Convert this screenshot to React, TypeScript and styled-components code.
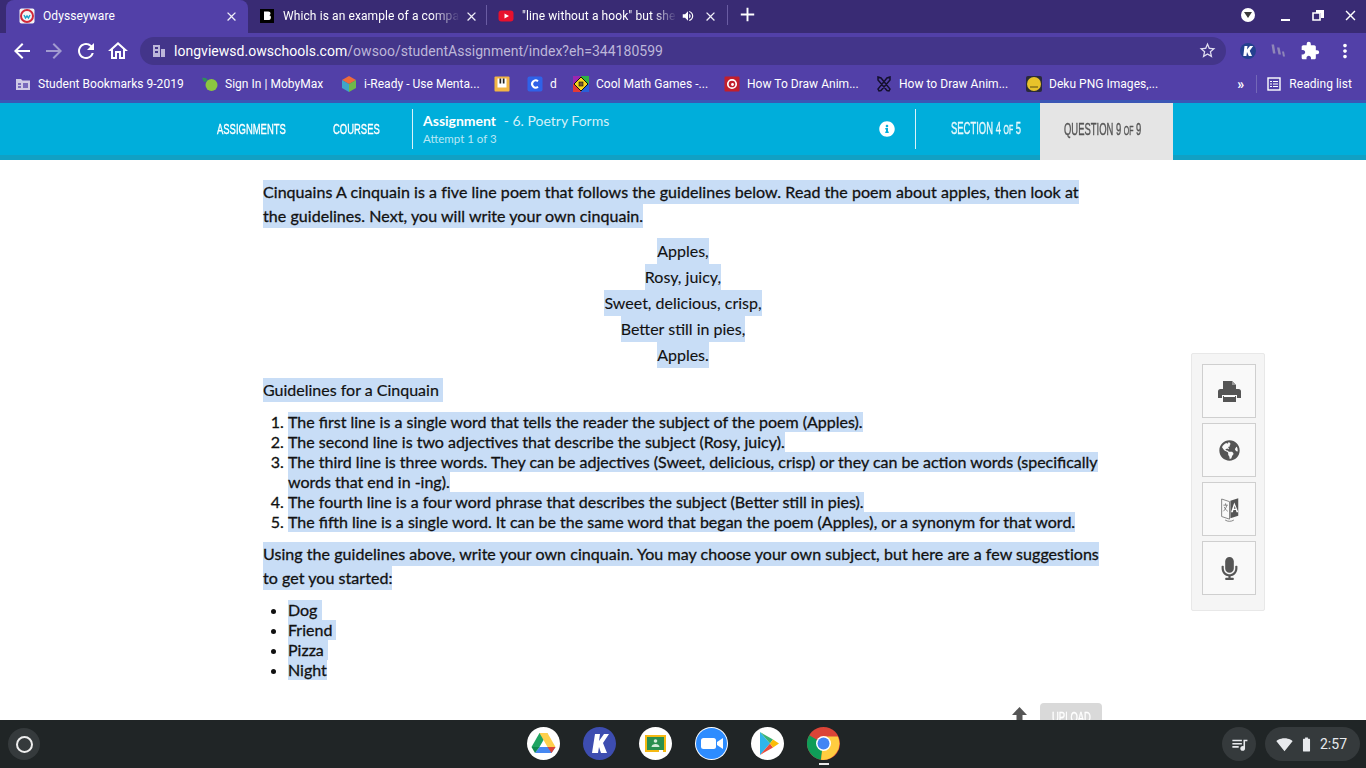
import React from "react";
import styled, { createGlobalStyle } from "styled-components";
import {
  MdArrowBack, MdArrowForward, MdRefresh, MdOutlineHome, MdStarBorder, MdExtension,
  MdMoreVert, MdClose, MdAdd, MdSignalWifi4Bar, MdBatteryFull, MdQueueMusic, MdVolumeUp,
} from "react-icons/md";
import { FaGlobeAmericas, FaMicrophone, FaInfoCircle } from "react-icons/fa";

const Global = createGlobalStyle`
  html, body { margin: 0; padding: 0; height: 100%; overflow: hidden; background: #fff; }
  * { box-sizing: border-box; }
`;

const Screen = styled.div`
  width: 1366px; height: 768px; display: flex; flex-direction: column; overflow: hidden;
  font-family: Roboto, "Liberation Sans", sans-serif;
`;
const TabStrip = styled.div`
  height: 33px; flex: none; background: #392b74; display: flex; align-items: stretch; padding-left: 6px; color: #fff;
`;
const Tab = styled.div<{ $active?: boolean; $w: number; $pr?: number }>`
  width: ${p => p.$w}px; flex: none; display: flex; align-items: center; padding: 0 ${p => p.$pr ?? 9}px 1px ${p => (p.$active ? 13 : 11)}px; gap: 8px;
  font-size: 12px; background: ${p => (p.$active ? "#5240a8" : "transparent")};
  border-radius: ${p => (p.$active ? "8px 8px 0 0" : "0")}; position: relative; color: #fff;
`;
const TabSep = styled.div`
  width: 1px; height: 20px; flex: none; align-self: center; margin-top: -3px; background: #6a5ca3;
`;
const TabTitle = styled.span<{ $fade?: boolean }>`
  flex: 1; white-space: nowrap; letter-spacing: .1px;
  ${p => p.$fade ? "mask-image: linear-gradient(90deg,#000 84%,transparent 100%);" : ""}
`;
const TabClose = styled(MdClose)<{ $pull?: number }>`
  flex: none; font-size: 15px; color: #f0eef8; margin-left: ${p => p.$pull ?? 0}px;
`;
const TabAudio = styled(MdVolumeUp)`
  flex: none; font-size: 14px; margin-left: -4px;
`;
const NewTab = styled(MdAdd)`
  font-size: 23px; margin: 3px 0 0 8px; color: #fff;
`;
const WinControls = styled.div`
  margin-left: auto; display: flex; align-items: center; padding-right: 7px; gap: 16px; height: 30px;
`;
const ProfileDot = styled.div`
  width: 14px; height: 14px; border-radius: 50%; background: #fff; display: flex; align-items: center; justify-content: center; margin-right: 7px;
`;
const Toolbar = styled.div`
  height: 33px; flex: none; background: #5240a8; display: flex; align-items: center; padding: 2px 0 0 10px; color: #fff;
`;
const NavIcons = styled.div`
  display: flex; align-items: center; gap: 8px; width: 130px; font-size: 24px;
`;
const Omnibox = styled.div`
  width: 1086px; height: 28px; border-radius: 14px; background: #43358a; display: flex; align-items: center; padding: 0 9px 0 11px; font-size: 14px; letter-spacing: .03px;
`;
const Url = styled.span`
  margin-left: 7px; color: #fff; flex: 1;
  em { font-style: normal; color: #bdb7d9; }
`;
const Extensions = styled.div`
  display: flex; align-items: center; flex: 1; padding-left: 14px; gap: 14px;
`;
const Bookmarks = styled.div`
  height: 34px; flex: none; background: #5240a8; display: flex; align-items: center; padding: 2px 0 0 15px; font-size: 12px; letter-spacing: .03px; color: #fff; position: relative;
`;
const Bookmark = styled.div<{ $w?: number }>`
  display: flex; align-items: center; gap: 7px; white-space: nowrap; flex: none;
  ${p => (p.$w ? `width: ${p.$w}px;` : "")}
`;
const BookmarkEnd = styled.div`
  position: absolute; right: 14px; top: 1px; height: 34px; display: flex; align-items: center; gap: 9px;
`;
const Chevrons = styled.span`
  font-size: 14px; font-weight: 700; margin-right: 3px;
`;
const VLine = styled.div`
  width: 1px; height: 18px; background: #7468b8;
`;
const NavBar = styled.div`
  height: 60px; flex: none; background: #00aedb; border-top: 3px solid #3b56b5; border-bottom: 5px solid #11a0c4;
  display: flex; align-items: center; color: #fff; padding-left: 217px;
`;
const Condensed = styled.span<{ $color?: string; $big?: boolean }>`
  display: inline-block; transform: scale(.63, ${p => (p.$big ? 1.12 : 1)}); transform-origin: left center; white-space: nowrap;
  font-family: "Liberation Sans", sans-serif; font-size: 15px; color: ${p => p.$color ?? "#fff"};
  -webkit-text-stroke: .35px ${p => p.$color ?? "#fff"};
  small { font-size: 11px; }
`;
const NavLink = styled.span<{ $w: number }>`
  width: ${p => p.$w}px; display: block; padding-bottom: 2px;
`;
const NavDivider = styled.div`
  width: 1px; height: 40px; background: #d8f2f9;
`;
const Crumb = styled.div`
  margin-left: 10px; width: 456px; font-family: Lato, sans-serif; line-height: 18px; padding-top: 2px;
`;
const CrumbTop = styled.div`
  font-size: 14px; color: #d3f1f9;
  b { color: #fff; font-weight: 700; margin-right: 4px; }
`;
const CrumbSub = styled.div`
  font-size: 11.500px; color: #b9e8f5;
`;
const InfoIcon = styled(FaInfoCircle)`
  font-size: 16px; color: #fff; margin-right: 20px;
`;
const SectionLabel = styled.div`
  margin-left: 35px; width: 89px; padding-bottom: 4px;
`;
const QuestionTab = styled.div`
  width: 133px; height: 57px; align-self: flex-start; background: #e5e5e5; display: flex; align-items: center; padding: 0 0 7px 24px;
`;
const Main = styled.main`
  flex: 1; min-height: 0; overflow: hidden; position: relative; background: #fff;
`;
const Column = styled.div`
  width: 840px; margin-left: 263px; padding-top: 19px; font-family: Lato, sans-serif; font-size: 16px; color: #111;
`;
const Hl = styled.span<{ $t?: number; $b?: number }>`
  background: #c8ddf6; padding: ${p => p.$t ?? 1.5}px 0 ${p => p.$b ?? 3.5}px; -webkit-box-decoration-break: clone; box-decoration-break: clone;
`;
const Para = styled.p<{ $mt?: number; $bold?: boolean }>`
  margin: ${p => p.$mt ?? 0}px 0 0; line-height: 24px; letter-spacing: ${p => (p.$bold ? ".05px" : "0")};
  -webkit-text-stroke: ${p => (p.$bold ? ".3px #111" : ".2px #111")};
`;
const Poem = styled.div`
  margin-top: 10px; text-align: center; line-height: 26px; -webkit-text-stroke: .1px #111;
`;
const List = styled.ol`
  margin: 11px 0 0; padding-left: 25px; line-height: 20px; -webkit-text-stroke: .3px #111;
`;
const BulletList = styled.ul`
  margin: 11px 0 0; padding-left: 25px; line-height: 20px; -webkit-text-stroke: .3px #111;
`;
const UploadRow = styled.div`
  position: absolute; left: 1012px; top: 543px; display: flex; gap: 13px; align-items: flex-start;
`;
const UploadBtn = styled.div`
  width: 62px; height: 30px; border-radius: 4px; background: #d9d9d9; padding: 4px 0 0 12px;
`;
const ToolPanel = styled.aside`
  position: absolute; left: 1191px; top: 193px; width: 74px; height: 258px; background: #f5f5f5; border: 1px solid #e8e8e8; border-radius: 2px;
  display: flex; flex-direction: column; align-items: center; gap: 5px; padding: 10px 0 0 2px;
`;
const ToolBtn = styled.div`
  width: 54px; height: 54px; background: #f9f9f9; border: 1px solid #cfcfcf; display: flex; align-items: center; justify-content: center; color: #555; font-size: 21px;
`;
const Shelf = styled.footer`
  height: 48px; flex: none; background: #202526; display: flex; align-items: center; position: relative; padding: 0 6px 0 8px;
`;
const Launcher = styled.div`
  width: 32px; height: 32px; border-radius: 50%; background: #353a3c; display: flex; align-items: center; justify-content: center;
  &::after { content: ""; width: 13px; height: 13px; border: 2px solid #eee; border-radius: 50%; }
`;
const Dock = styled.div`
  position: absolute; left: 527px; top: 7px; display: flex; gap: 23px;
`;
const DockItem = styled.div<{ $on?: boolean }>`
  width: 33px; height: 33px; position: relative;
  svg { display: block; }
  ${p => p.$on ? `&::after { content: ""; position: absolute; left: 12px; bottom: -5px; width: 10px; height: 2px; background: #e8e8e8; }` : ""}
`;
const Tray = styled.div`
  margin-left: auto; display: flex; align-items: center; gap: 9px; color: #e8eaed;
`;
const TrayCircle = styled.div`
  width: 34px; height: 34px; border-radius: 50%; background: #353a3c; display: flex; align-items: center; justify-content: center; font-size: 19px;
`;
const TrayPill = styled.div`
  width: 95px; height: 34px; border-radius: 17px; background: #353a3c; display: flex; align-items: center; padding-left: 11px; font-size: 14px; gap: 5px;
`;

const Fav = ({ children, s = 16 }: { children: React.ReactNode; s?: number }) => (
  <svg width={s} height={s} viewBox="0 0 16 16" style={{ flex: "none" }}>{children}</svg>
);
const Folder = () => (
  <Fav><path d="M1 3h5l1.500 1.500H15V14H1z" fill="#cfc9e6" /><path d="M8 7h5v5H8zM3 7h3v2H3zM3 10h3v2H3z" fill="#5240a8" opacity=".7" /></Fav>
);

export default function App() {
  return (
    <Screen>
      <Global />
      <TabStrip>
        <Tab $active $w={242}>
          <Fav><rect x="0.5" y="0.5" width="15" height="15" rx="2" fill="#f4f4f4" /><circle cx="8" cy="8" r="6" fill="none" stroke="#d3283a" strokeWidth="2" /><path d="M5 7l1.500 3L8 8l1.500 2L11 7" stroke="#1ba0c8" strokeWidth="1.400" fill="none" /></Fav>
          <TabTitle>Odysseyware</TabTitle>
          <TabClose />
        </Tab>
        <Tab $w={238} $pr={7}>
          <Fav><rect x="1" y="1" width="14" height="14" fill="#000" /><path d="M5 3.500h4.200c1.600 0 2.300.9 2.300 2 0 .9-.5 1.500-1.200 1.800 1 .2 1.600 1 1.600 2.100 0 1.600-1 2.600-2.800 2.600H5z" fill="#fff" /></Fav>
          <TabTitle $fade>Which is an example of a compa</TabTitle>
          <TabClose $pull={-4} />
        </Tab>
        <TabSep />
        <Tab $w={240}>
          <Fav><rect x="0.5" y="2.500" width="15" height="11" rx="3" fill="#e8112d" /><path d="M6.500 5.500v5L11 8z" fill="#fff" /></Fav>
          <TabTitle $fade>"line without a hook" but she</TabTitle>
          <TabAudio />
          <TabClose />
        </Tab>
        <TabSep />
        <NewTab />
        <WinControls>
          <ProfileDot><svg width="8" height="6" viewBox="0 0 8 6"><path d="M0 0h8L4 6z" fill="#3a3a3a" /></svg></ProfileDot>
          <svg width="16" height="16" viewBox="0 0 16 16"><path d="M3 12h9v2H3z" fill="#fff" /></svg>
          <svg width="16" height="16" viewBox="0 0 16 16"><path d="M3 6h7v7H3z" fill="none" stroke="#fff" strokeWidth="1.600" /><path d="M6 3h8v8h-3V6H6z" fill="#fff" /></svg>
          <MdClose size={17} />
        </WinControls>
      </TabStrip>
      <Toolbar>
        <NavIcons>
          <MdArrowBack />
          <MdArrowForward color="#a29bd0" />
          <MdRefresh />
          <MdOutlineHome />
        </NavIcons>
        <Omnibox>
          <Fav><path d="M2 2h7v12H2zM10 6h4v8h-4z" fill="#bdb7d9" /><path d="M4 4h3v2H4zM4 8h3v2H4z" fill="#43358a" /></Fav>
          <Url>longviewsd.owschools.com<em>/owsoo/studentAssignment/index?eh=344180599</em></Url>
          <MdStarBorder size={19} color="#e0ddf0" />
        </Omnibox>
        <Extensions>
          <Fav><circle cx="8" cy="8" r="8" fill="#24408f" /><path d="M4.500 3h3l-.5 3.500L10 3h3.200l-3.500 4.700L12 13H8.800L7 9l-.6 4H3.300z" fill="#fff" /></Fav>
          <Fav><path d="M1.500 1.500h2.500l1.500 9H3zM7 4.500h2.500l1.500 7H8.500zM12 8.500h2l1 5h-2z" fill="#8f86b8" /></Fav>
          <MdExtension size={20} />
          <MdMoreVert size={22} />
        </Extensions>
      </Toolbar>
      <Bookmarks>
        <Bookmark $w={187}><Folder /> Student Bookmarks 9-2019</Bookmark>
        <Bookmark $w={139}><Fav><path d="M0 2c3-1 5 0 6 3L2 6z" fill="#2f8f5b" /><circle cx="9.500" cy="9" r="6" fill="#8cc63f" /></Fav> Sign In | MobyMax</Bookmark>
        <Bookmark $w={153}><Fav><path d="M8 0l7 4-7 4-7-4z" fill="#ef6b3a" /><path d="M1 4l7 4v8l-7-4z" fill="#3ea6c8" /><path d="M15 4L8 8v8l7-4z" fill="#6fb84a" /></Fav> i-Ready - Use Menta...</Bookmark>
        <Bookmark $w={33}><Fav><rect x="0.5" y="0.5" width="15" height="15" rx="1" fill="#f2b544" /><path d="M3.500 2.500h9v9h-9z" fill="#fff" /><path d="M5.500 2.500h1.700v5H5.500zM8.800 2.500h1.700v5H8.800z" fill="#222" /></Fav></Bookmark>
        <Bookmark $w={46}><Fav><rect x="0.5" y="0.5" width="15" height="15" rx="2" fill="#2f62e8" /><path d="M11 5.200A3.600 3.600 0 1 0 11 10.800" fill="none" stroke="#fff" strokeWidth="2" /></Fav> d</Bookmark>
        <Bookmark $w={151}><Fav><path d="M0 0h8v8H0z" fill="#9c27b0" /><path d="M8 0h8v8H8z" fill="#2fb344" /><path d="M0 8h8v8H0z" fill="#e53935" /><path d="M8 8h8v8H8z" fill="#2a5fd8" /><path d="M8 1l7 7-7 7-7-7z" fill="#f7d51d" stroke="#111" /><rect x="6" y="6" width="4" height="4" fill="#7a5c2e" stroke="#111" strokeWidth=".6" /></Fav> Cool Math Games -...</Bookmark>
        <Bookmark $w={152}><Fav><rect x="0.5" y="0.5" width="15" height="15" rx="1" fill="#c21f2c" /><circle cx="8" cy="8" r="4.200" fill="none" stroke="#fff" strokeWidth="1.700" /><circle cx="8.500" cy="8.500" r="1.400" fill="#fff" /></Fav> How To Draw Anim...</Bookmark>
        <Bookmark $w={150}><Fav><path d="M2 1l3 1 9 11-1 2-2-.5L2 4zM14 1l-3 1-9 11 1 2 2-.5L14 4z" stroke="#14102e" strokeWidth="1.500" fill="none" /></Fav> How to Draw Anim...</Bookmark>
        <Bookmark><Fav><rect width="16" height="16" rx="2" fill="#2a2a3a" /><circle cx="8" cy="8" r="7" fill="#e8c32a" /><path d="M4 10.500h8v1H4z" fill="#5a4a10" /></Fav> Deku PNG Images,...</Bookmark>
        <BookmarkEnd>
          <Chevrons>»</Chevrons>
          <VLine />
          <Bookmark>
            <Fav><rect x="2" y="2" width="12" height="12" fill="none" stroke="#fff" strokeWidth="1.400" /><path d="M4 5h2v1H4zM7 5h5v1H7zM4 7.500h2v1H4zM7 7.500h5v1H7zM4 10h2v1H4zM7 10h5v1H7z" fill="#fff" /></Fav>
            Reading list
          </Bookmark>
        </BookmarkEnd>
      </Bookmarks>
      <NavBar>
        <NavLink $w={116}><Condensed>ASSIGNMENTS</Condensed></NavLink>
        <NavLink $w={79}><Condensed>COURSES</Condensed></NavLink>
        <NavDivider />
        <Crumb>
          <CrumbTop><b>Assignment</b> - 6. Poetry Forms</CrumbTop>
          <CrumbSub>Attempt 1 of 3</CrumbSub>
        </Crumb>
        <InfoIcon />
        <NavDivider />
        <SectionLabel><Condensed $big $color="#e6f8fc">SECTION 4 <small>OF</small> 5</Condensed></SectionLabel>
        <QuestionTab><Condensed $big $color="#555">QUESTION 9 <small>OF</small> 9</Condensed></QuestionTab>
      </NavBar>
      <Main>
        <Column>
          <Para $bold><Hl>Cinquains A cinquain is a five line poem that follows the guidelines below. Read the poem about apples, then look at the guidelines. Next, you will write your own cinquain. </Hl></Para>
          <Poem>
            <div><Hl $t={2.5} $b={4.5}>Apples,</Hl></div>
            <div><Hl $t={2.5} $b={4.5}>Rosy, juicy,</Hl></div>
            <div><Hl $t={2.5} $b={4.5}>Sweet, delicious, crisp,</Hl></div>
            <div><Hl $t={2.5} $b={4.5}>Better still in pies,</Hl></div>
            <div><Hl $t={2.5} $b={4.5}>Apples.</Hl></div>
          </Poem>
          <Para $mt={10}><Hl>Guidelines for a Cinquain&nbsp;</Hl></Para>
          <List>
            <li><Hl $t={0} $b={1}>The first line is a single word that tells the reader the subject of the poem (Apples).</Hl></li>
            <li><Hl $t={0} $b={1}>The second line is two adjectives that describe the subject (Rosy, juicy).</Hl></li>
            <li><Hl $t={0} $b={1}>The third line is three words. They can be adjectives (Sweet, delicious, crisp) or they can be action words (specifically words that end in -ing). </Hl></li>
            <li><Hl $t={0} $b={1}>The fourth line is a four word phrase that describes the subject (Better still in pies).</Hl></li>
            <li><Hl $t={0} $b={1}>The fifth line is a single word. It can be the same word that began the poem (Apples), or a synonym for that word.</Hl></li>
          </List>
          <Para $bold $mt={9}><Hl>Using the guidelines above, write your own cinquain. You may choose your own subject, but here are a few suggestions to get you started: </Hl></Para>
          <BulletList>
            <li><Hl $t={0} $b={1}>Dog&nbsp;</Hl></li>
            <li><Hl $t={0} $b={1}>Friend&nbsp;</Hl></li>
            <li><Hl $t={0} $b={1}>Pizza&nbsp;</Hl></li>
            <li><Hl $t={0} $b={1}>Night</Hl></li>
          </BulletList>
        </Column>
        <ToolPanel>
          <ToolBtn>
            <svg width="23" height="21" viewBox="0 0 23 21"><path d="M5 0h9l4 4v5H5z" fill="#555" /><path d="M14 0v4h4" fill="#999" /><path d="M2.500 8H20.500A2.500 2.500 0 0 1 23 10.500V17h-4v-3H4v3H0v-6.500A2.500 2.500 0 0 1 2.500 8z" fill="#555" /><path d="M5 15h13v6H5z" fill="#555" /><path d="M6 15h11v1H6z" fill="#fff" /></svg>
          </ToolBtn>
          <ToolBtn><FaGlobeAmericas /></ToolBtn>
          <ToolBtn>
            <svg width="21" height="25" viewBox="0 0 24 28"><path d="M13 4l9-3v20l-9 3z" fill="#555" /><path d="M12 5L3 2v20l9 3z" fill="none" stroke="#777" /><path fillRule="evenodd" d="M17.500 6l-3.800 11h2.100l.7-2.400h2.800l.7 2.400h2.100zM17 13l1-3.400 1 3.400z" fill="#fff" /><path d="M5 9h5M7.500 7v2M9 9c-1 4-3 6-4 7M6 11c1 2 2 4 4 5" stroke="#777" fill="none" /><path d="M7 26c3 2 7 2 10 0" stroke="#777" fill="none" /></svg>
          </ToolBtn>
          <ToolBtn><FaMicrophone size={23} /></ToolBtn>
        </ToolPanel>
        <UploadRow>
          <svg width="15" height="24" viewBox="0 0 15 24" style={{ marginTop: 4 }}><path d="M7.500 0L15 8h-4.500v16h-6V8H0z" fill="#555" /></svg>
          <UploadBtn><Condensed>UPLOAD</Condensed></UploadBtn>
        </UploadRow>
      </Main>
      <Shelf>
        <Launcher />
        <Dock>
          <DockItem>
            <svg width="33" height="33" viewBox="0 0 33 33"><circle cx="16.500" cy="16.500" r="16.500" fill="#fff" /><path d="M12.500 6h8l-8 14H4.500z" fill="#1fa463" /><path d="M12.500 6h8l8 14h-8z" fill="#ffd04b" /><path d="M8 26l4.500-6H28.500L24.500 26z" fill="#4688f1" /><path d="M4.500 20h8L8 26z" fill="#0f8a4f" /><path d="M20.500 20h8l-4 6z" fill="#db4437" /></svg>
          </DockItem>
          <DockItem>
            <svg width="33" height="33" viewBox="0 0 33 33"><circle cx="16.500" cy="16.500" r="16.500" fill="#3d4db0" /><path d="M12 7h5l-1 7 5-7h5l-6 9 4 10h-6l-2-6-1 6h-6z" fill="#fff" /></svg>
          </DockItem>
          <DockItem>
            <svg width="33" height="33" viewBox="0 0 33 33"><circle cx="16.500" cy="16.500" r="16.500" fill="#fff" /><rect x="6" y="8" width="21" height="17" fill="#f5b913" /><rect x="8" y="10" width="17" height="13" fill="#2a8f4e" /><circle cx="16.500" cy="14" r="1.800" fill="#d5ecd9" /><path d="M12.500 20c0-4 8-4 8 0z" fill="#d5ecd9" /><path d="M20 23h4v2h-4z" fill="#fff" /></svg>
          </DockItem>
          <DockItem>
            <svg width="33" height="33" viewBox="0 0 33 33"><circle cx="16.500" cy="16.500" r="16.500" fill="#fff" /><circle cx="16.500" cy="16.500" r="15.500" fill="#2d8cff" /><rect x="6" y="11" width="15" height="11" rx="2.500" fill="#fff" /><path d="M22 15l6-4v11l-6-4z" fill="#fff" /></svg>
          </DockItem>
          <DockItem>
            <svg width="33" height="33" viewBox="0 0 33 33"><circle cx="16.500" cy="16.500" r="16.500" fill="#fff" /><path d="M9 5l10 11.500L9 28z" fill="#2fb5ea" /><path d="M9 5l13 7.500-3 4z" fill="#3bb273" /><path d="M9 28l13-7.500-3-4z" fill="#e94b3c" /><path d="M22 12.500l6 4-6 4-3-4z" fill="#fbbc05" /></svg>
          </DockItem>
          <DockItem $on>
            <svg width="33" height="33" viewBox="0 0 33 33"><circle cx="16.500" cy="16.500" r="16.500" fill="#db4437" /><path d="M16.500 16.500L2.200 8.200A16.500 16.500 0 0 0 14 32.800z" fill="#0f9d58" /><path d="M16.500 9.500h14.300A16.500 16.500 0 0 1 14 32.800z" fill="#ffcd40" /><circle cx="16.500" cy="16.500" r="7.500" fill="#fff" /><circle cx="16.500" cy="16.500" r="6" fill="#4285f4" /></svg>
          </DockItem>
        </Dock>
        <Tray>
          <TrayCircle><MdQueueMusic /></TrayCircle>
          <TrayPill>
            <MdSignalWifi4Bar size={17} />
            <MdBatteryFull size={17} />
            <span>2:57</span>
          </TrayPill>
        </Tray>
      </Shelf>
    </Screen>
  );
}
